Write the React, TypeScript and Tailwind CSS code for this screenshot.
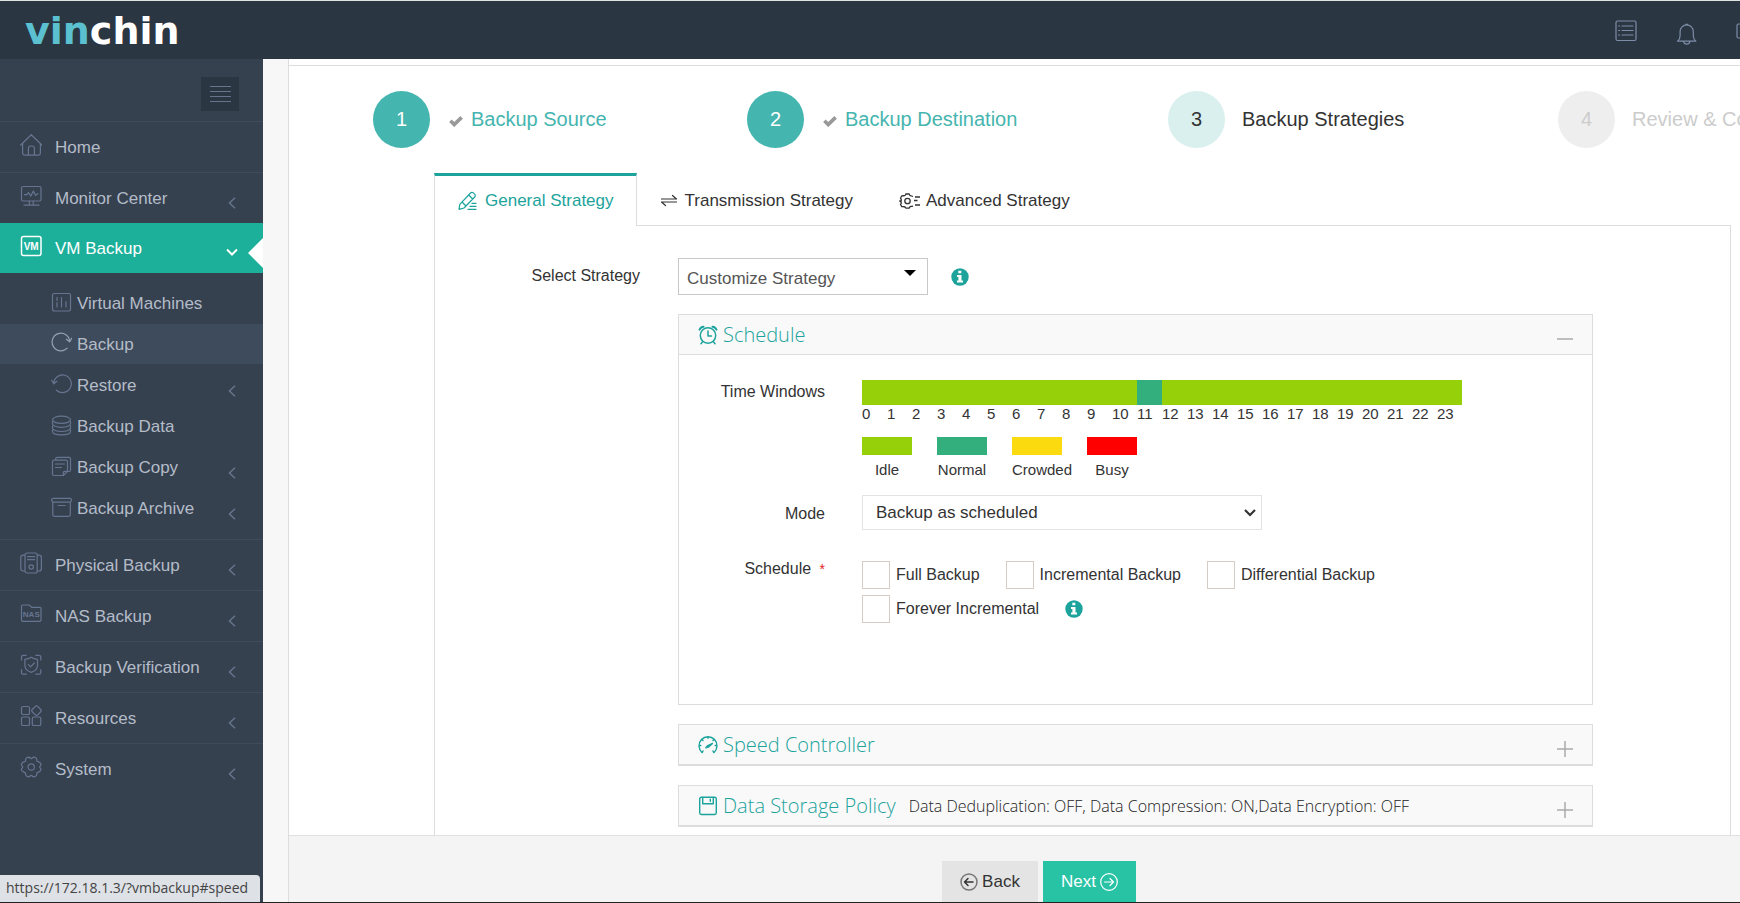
import { useState, type ReactNode } from "react";

type IconProps = { children: ReactNode; size?: string; box?: string };

function Icon({ children, size = "size-[22px]", box = "0 0 22 22" }: IconProps) {
  return (
    <svg
      viewBox={box}
      className={`${size} shrink-0`}
      fill="none"
      stroke="currentColor"
      strokeWidth="1.2"
      strokeLinecap="round"
      strokeLinejoin="round"
      aria-hidden="true"
    >
      {children}
    </svg>
  );
}

const icons = {
  home: (
    <Icon>
      <path d="M.7 11 11.3.7 21.9 11M2.6 9.5V19a2.2 2.2 0 0 0 2.2 2.2h13.4a2.2 2.2 0 0 0 2.2-2.2V9.5M8.4 21.2v-7a2.2 2.2 0 0 1 2.2-2.2h1.6a2.2 2.2 0 0 1 2.2 2.2v7" />
    </Icon>
  ),
  monitor: (
    <Icon>
      <rect x="1.5" y="1.5" width="19.5" height="14.5" rx="1.5" />
      <path d="M4.5 9.7h2.3l1.7-2.2 2.3 3.6 2.5-5 2.2 4.2 2.4-1.6M9.3 16v4M13.2 16v4M4 20.2h15" />
    </Icon>
  ),
  vm: (
    <Icon>
      <rect x="1.5" y="1.5" width="19.5" height="19" rx="2" strokeWidth="1.5" />
      <text x="11.2" y="14.8" textAnchor="middle" fontSize="10" fontWeight="700" fontFamily="Liberation Sans, sans-serif" fill="currentColor" stroke="none">
        VM
      </text>
    </Icon>
  ),
  physical: (
    <Icon>
      <path d="M5 3.2H3A2.4 2.4 0 0 0 .8 5.6v11A2.4 2.4 0 0 0 3 19h2M17.2 3.2h2a2.4 2.4 0 0 1 2.2 2.4v11a2.4 2.4 0 0 1-2.2 2.4h-2M5 3a2 2 0 0 1 2-2h8.2a2 2 0 0 1 2 2v16a2 2 0 0 1-2 2H7a2 2 0 0 1-2-2zM7.5 4.7h7.2M7.5 7.7h7.2" />
      <circle cx="11.2" cy="15" r="2.2" />
    </Icon>
  ),
  nas: (
    <Icon>
      <path d="M1.5 4V17a1.3 1.3 0 0 0 1.3 1.3h16.9a1.3 1.3 0 0 0 1.3-1.3V5.6a1.3 1.3 0 0 0-1.3-1.3h-8L9 2H2.8a1.3 1.3 0 0 0-1.3 1.3z" />
      <text x="11.3" y="13.900" textAnchor="middle" fontSize="8" fontWeight="700" fontFamily="Liberation Sans, sans-serif" fill="currentColor" stroke="none">
        NAS
      </text>
    </Icon>
  ),
  verify: (
    <Icon>
      <path d="M1.5 6V3A1.7 1.7 0 0 1 3.2 1.3h3M15.8 1.3h3A1.7 1.7 0 0 1 20.8 3v3M20.8 15.5v3a1.7 1.7 0 0 1-1.7 1.7h-3.3M6.2 20.2h-3a1.7 1.7 0 0 1-1.7-1.7v-3" />
      <path d="M11.2 3.3c2 1.4 4.2 1.9 6.3 2v6.2c0 3.5-2.6 5.6-6.3 6.9-3.7-1.3-6.3-3.4-6.3-6.9V5.3c2.1-.1 4.3-.6 6.3-2z" />
      <path d="m8.5 10.700 2.100 2.200 3.700-3.900" />
    </Icon>
  ),
  resources: (
    <Icon>
      <rect x="1.5" y="1.5" width="8" height="8" rx="1.600" />
      <rect x="1.5" y="12" width="8" height="8.5" rx="1.600" />
      <rect x="12.300" y="12" width="8.5" height="8.5" rx="1.600" />
      <rect x="12.700" y="1.800" width="7.600" height="7.600" rx="1.600" transform="rotate(45 16.5 5.600)" />
    </Icon>
  ),
  system: (
    <Icon>
      <circle cx="11.2" cy="11" r="3.2" />
      <path d="M8.600 1.200c1.400 0 1.600 1.400 2.600 1.400s1.200-1.400 2.600-1.400c2.300.3 3.300 1.800 3 3.600.2 1 3.600.7 4.200 3.500.3 1.400-1.300 1.700-1.300 2.700s1.600 1.300 1.300 2.700c-.6 2.800-4 2.500-4.200 3.500.3 1.800-.7 3.300-3 3.600-1.400 0-1.600-1.400-2.600-1.400s-1.200 1.400-2.600 1.400c-2.300-.3-3.300-1.800-3-3.600-.2-1-3.600-.7-4.200-3.500-.3-1.400 1.300-1.700 1.300-2.700S1.100 9.700 1.400 8.300C2 5.500 5.400 5.800 5.600 4.800c-.3-1.800.7-3.300 3-3.600z" />
    </Icon>
  ),
};

const sub = { size: "size-[21px]", box: "0 0 21 21" };

const subIcons = {
  machines: (
    <Icon {...sub}>
      <rect x="1.5" y="1.5" width="18" height="17.5" rx="1.700" />
      <path d="M6 5.5v3M6 10.5v4.500M10.500 5.500v9.500M15 9.500V15" />
    </Icon>
  ),
  backup: (
    <Icon {...sub}>
      <path d="M16.200 16.200A8.800 8.800 0 1 1 18.700 9.500M15.300 7.300l3.400 2.500 2-3.600" />
    </Icon>
  ),
  restore: (
    <Icon {...sub}>
      <path d="M5.500 16.200A8.800 8.800 0 1 0 2.700 9.500M5.900 7.300 2.700 9.800.7 6.200" />
    </Icon>
  ),
  data: (
    <Icon {...sub}>
      <ellipse cx="10.5" cy="4.800" rx="9" ry="3.600" />
      <path d="M1.500 6.500v2.300c0 2 4 3.500 9 3.500s9-1.500 9-3.500V6.500M1.500 11v2c0 2 4 3.500 9 3.500s9-1.500 9-3.500v-2M1.500 14.800v1.700c0 2 4 3.300 9 3.300s9-1.300 9-3.300v-1.700" />
    </Icon>
  ),
  copy: (
    <Icon {...sub}>
      <path d="M4.700 4V2.800a1.500 1.500 0 0 1 1.500-1.500H18a1.500 1.500 0 0 1 1.500 1.500V14a1.500 1.500 0 0 1-1.500 1.500h-1M12.300 19.500H3A1.500 1.500 0 0 1 1.500 18V5.700A1.500 1.500 0 0 1 3 4.200h12a1.500 1.500 0 0 1 1.500 1.500v9.600l-4.200 4.200v-2.700a1.500 1.500 0 0 1 1.500-1.500h2.700M4.500 8h9M4.500 11.500h6" />
    </Icon>
  ),
  archive: (
    <Icon {...sub}>
      <rect x=".7" y="1.300" width="19.700" height="3.800" rx="1.5" />
      <path d="M1.800 5.200v12.600a1.500 1.500 0 0 0 1.500 1.500h14.500a1.500 1.500 0 0 0 1.500-1.500V5.200M7 8.500h7" />
    </Icon>
  ),
};

function Caret({ open }: { open?: boolean }) {
  return open ? (
    <svg viewBox="0 0 12 12" className="mr-[25px] mt-2 size-3" fill="none" stroke="currentColor" strokeWidth="2" aria-hidden="true">
      <path d="m1 3.500 5 5 5-5" />
    </svg>
  ) : (
    <svg viewBox="0 0 12 12" className="mr-[25px] mt-[10px] size-3 text-[#66758b]" fill="none" stroke="currentColor" strokeWidth="1.5" aria-hidden="true">
      <path d="m9 .800-5.500 5.200 5.500 5.200" />
    </svg>
  );
}

function MenuRow({ icon, label, caret = true }: { icon: ReactNode; label: string; caret?: boolean }) {
  return (
    <li>
      <a href="#menu" className="flex h-[51px] items-center border-t border-[#3e4b5c] pl-5">
        <span className="mb-1 text-[#66758f]">{icon}</span>
        <span className="ml-[13px] flex-1 pt-px">{label}</span>
        {caret && <Caret />}
      </a>
    </li>
  );
}

function SubRow({ icon, label, caret, active }: { icon: ReactNode; label: string; caret?: boolean; active?: boolean }) {
  return (
    <li>
      <a href="#submenu" className={active ? "mb-px flex h-10 items-center bg-[#3e4b5c] pl-[51px]" : "flex h-[41px] items-center pl-[51px]"}>
        <span className={active ? "mb-[3px] text-[#94a0b4]" : "mb-[3px] text-[#66758f]"}>{icon}</span>
        <span className="ml-[5px] flex-1 pt-px">{label}</span>
        {caret && <Caret />}
      </a>
    </li>
  );
}

function Sidebar() {
  return (
    <nav className="w-[263px] shrink-0 bg-[#364150] text-[17px] text-[#b4bcc8]">
      <div className="flex h-[62px] justify-end pr-6 pt-[18px]">
        <button aria-label="Toggle menu" className="flex h-[34px] w-[38px] items-center justify-center bg-[#2b3643] text-[#66758b]">
          <svg viewBox="0 0 21 17" className="h-[17px] w-[21px]" stroke="currentColor" aria-hidden="true">
            <path d="M0 .500h21M0 5.500h21M0 10.500h21M0 15.500h21" />
          </svg>
        </button>
      </div>
      <ul>
        <MenuRow icon={icons.home} label="Home" caret={false} />
        <MenuRow icon={icons.monitor} label="Monitor Center" />
        <li>
          <a href="#vmbackup" className="relative flex h-[50px] items-center bg-[#1caf9a] pl-5 text-white">
            <span className="mb-1">{icons.vm}</span>
            <span className="ml-[13px] flex-1 pt-px">VM Backup</span>
            <Caret open />
            <svg viewBox="0 0 15 30" className="absolute bottom-[5px] right-0 h-[30px] w-[15px]" fill="#fff" aria-hidden="true">
              <path d="M15 0v30L0 15z" />
            </svg>
          </a>
          <ul className="py-[10px]">
            <SubRow icon={subIcons.machines} label="Virtual Machines" />
            <SubRow icon={subIcons.backup} label="Backup" active />
            <SubRow icon={subIcons.restore} label="Restore" caret />
            <SubRow icon={subIcons.data} label="Backup Data" />
            <SubRow icon={subIcons.copy} label="Backup Copy" caret />
            <SubRow icon={subIcons.archive} label="Backup Archive" caret />
          </ul>
        </li>
        <MenuRow icon={icons.physical} label="Physical Backup" />
        <MenuRow icon={icons.nas} label="NAS Backup" />
        <MenuRow icon={icons.verify} label="Backup Verification" />
        <MenuRow icon={icons.resources} label="Resources" />
        <MenuRow icon={icons.system} label="System" />
      </ul>
    </nav>
  );
}

function Header() {
  return (
    <header className="flex h-[59px] shrink-0 items-center justify-between overflow-hidden border-t border-[#dfe1e3] bg-[#2b3643] pl-[25px]">
      <a href="#home" className="pt-[2px] font-['DejaVu_Sans',sans-serif] text-[38px] font-bold leading-none text-white">
        <span className="text-[#5bc0cf]">vin</span>chin
      </a>
      <div className="-mr-[18px] flex items-center text-[#7d8da8]">
        <button aria-label="Tasks" className="mt-px">
          <Icon>
            <rect x="1" y="1" width="20" height="19.5" rx="1.5" />
            <path d="M3.600 6h1M7 6h11M3.600 10.500h1M7 10.500h11M3.600 15h1M7 15h11" />
          </Icon>
        </button>
        <button aria-label="Notifications" className="ml-[39px] mt-[7px]">
          <Icon>
            <path d="M1.500 18.200c2-1.500 2.600-3.200 2.600-5.500V8.500a6.600 6.600 0 0 1 13.200 0v4.200c0 2.300.6 4 2.600 5.500zM7.500 18.700a3.300 3.300 0 0 0 6.400 0M9.700 1.300h2" />
          </Icon>
        </button>
        <button aria-label="Account" className="ml-[38px] mt-1">
          <Icon>
            <rect x="1" y="3" width="20" height="14" rx="1.5" />
          </Icon>
        </button>
      </div>
    </header>
  );
}

function Check() {
  return (
    <svg viewBox="0 0 14 11" className="mt-1 h-[11px] w-[14px]" fill="none" stroke="#999" strokeWidth="3.600" aria-hidden="true">
      <path d="m1.400 4.800 3.800 3.800 7.400-7.200" />
    </svg>
  );
}

function Steps() {
  return (
    <ol className="grid grid-cols-[374fr_421fr_390fr_182fr] whitespace-nowrap pb-[25px] pl-[84px] pt-[25px] text-[20px]">
      {["Backup Source", "Backup Destination"].map((label, i) => (
        <li key={label} className="flex min-w-0 items-center text-[#45b5af]">
          <span className="flex size-[57px] shrink-0 items-center justify-center rounded-full bg-[#45b5af] pb-[2px] text-white">{i + 1}</span>
          <span className="ml-[19px] mr-2">
            <Check />
          </span>
          <span className="pb-[2px]">{label}</span>
        </li>
      ))}
      <li className="flex min-w-0 items-center text-[#333]">
        <span className="mr-[17px] flex size-[57px] shrink-0 items-center justify-center rounded-full bg-[#daf0ee] pb-[2px]">3</span>
        <span className="pb-[2px]">Backup Strategies</span>
      </li>
      <li className="flex min-w-0 items-center text-[#ccc]">
        <span className="mr-[17px] flex size-[57px] shrink-0 items-center justify-center rounded-full bg-[#eee] pb-[2px]">4</span>
        <span className="pb-[2px]">Review &amp; Confirm</span>
      </li>
    </ol>
  );
}

function Tabs() {
  return (
    <div role="tablist" className="flex h-[53px] border-b border-[#ddd] text-[17px] text-[#333]">
      <button role="tab" aria-selected="true" className="-mb-px flex items-center gap-2 border-x border-t-[3px] border-x-[#ddd] border-t-[#1ba39c] bg-white px-[22px] text-[#1ba39c]">
        <Icon size="size-5" box="0 0 20 20">
          <path d="M2 18.300l.8-5L13.500 2a2 2 0 0 1 2.900-.100l1.200 1.200a2 2 0 0 1 .1 2.900L7 17zM5 11l4 4M11.700 4l4 4M11 18.400h8M13 15.400h6M15 12.400h4" />
        </Icon>
        General Strategy
      </button>
      <button role="tab" aria-selected="false" className="flex items-center gap-2 pl-6 pr-[22px] pt-[3px]">
        <Icon size="size-4" box="0 0 16 16">
          <path d="M.500 6h15L11.500 2.500M15.500 9H.500l4 3.500" />
        </Icon>
        Transmission Strategy
      </button>
      <button role="tab" aria-selected="false" className="flex items-center gap-[6px] pl-6 pr-[22px] pt-[3px]">
        <svg viewBox="0 0 21 16" className="h-4 w-[21px]" fill="none" stroke="currentColor" strokeWidth="1.300" strokeLinejoin="round" aria-hidden="true">
          <circle cx="8.5" cy="8" r="2.700" />
          <path d="M14 3.500 12.700 3c-1-.3-1.700-.1-2.200-1.200L10.200 1H6.800l-.4 1C5.900 3 5.200 2.800 4.200 2.700l-1.400.1-1.300 2.400.6 1c.4.700.2 1 .1 1.800L.7 8l1.500 1.200v1.200l-.7 1.100 1.300 2.100 1.500.1c1 .1 1.600-.1 2.100.7l.5.700h3.300l.4-.8c.5-1 1.300-.8 2.300-.9l1.100-.3M16 4h5M15 7.500h3.500M16 12h5" />
        </svg>
        Advanced Strategy
      </button>
    </div>
  );
}

function Info() {
  return (
    <button aria-label="More information" className="text-[#1ba39c]">
      <svg viewBox="0 0 18 18" className="size-[18px]" aria-hidden="true">
        <circle cx="9" cy="9" r="8.700" fill="currentColor" />
        <path d="M7.300 2.800h3v2.500h-3zM6 7h4.500v5.500H12v2H6v-2h1.400V9H6z" fill="#fff" />
      </svg>
    </button>
  );
}

const alarmIcon = (
  <Icon size="size-5" box="0 0 20 20">
    <circle cx="10" cy="10.5" r="7.700" strokeWidth="1.5" />
    <path strokeWidth="1.5" d="M10 6v5h3.500M4.800 16.600 3 18.700M15.200 16.600l1.800 2.100" />
    <path strokeWidth="2" d="M1.500 4.700c.8-1.800 2-2.800 4-3M18.500 4.700c-.8-1.800-2-2.800-4-3" />
  </Icon>
);

const gaugeIcon = (
  <Icon size="size-5" box="0 0 20 20">
    <path strokeWidth="1.400" d="M4.200 17.600a9 9 0 1 1 11.600 0M4.200 17.600l.8-1.600M15.800 17.600l-.8-1.600M10 2v1.200M1.600 10.500h1.200M18.400 10.500h-1.200M4.200 4.700l.8.800M15.800 4.700l-.8.800M9.300 10.800l5.200-2.300-4.200 3.700-2.500.700z" />
  </Icon>
);

const diskIcon = (
  <Icon size="size-5" box="0 0 20 20">
    <rect x="1.700" y="1.200" width="16.600" height="17.300" rx="1.700" strokeWidth="1.400" />
    <path strokeWidth="1.400" d="M4.700 1.500v6.300h10.600V1.500M12.300 3.300v2" />
  </Icon>
);

type SectionProps = { icon: ReactNode; title: string; summary?: string; open?: boolean; children?: ReactNode };

function Section({ icon, title, summary, open, children }: SectionProps) {
  return (
    <section className={open ? "border border-[#ddd]" : "border border-b-2 border-[#ddd]"}>
      <div className={open ? "flex h-10 items-center border-b border-[#ddd] bg-[#f9f9f9] pl-[19px] pr-[19px]" : "flex h-[39px] items-center bg-[#f9f9f9] pl-[19px] pr-[19px]"}>
        <span className="text-[#1ba39c]">{icon}</span>
        <h3 className="ml-[5px] pt-px font-['Open_Sans',sans-serif] text-[20px] font-light leading-none text-[#1ba39c]">{title}</h3>
        {summary && <p className="ml-[13px] font-['Open_Sans',sans-serif] text-[16px] font-light leading-none text-[#222]">{summary}</p>}
        <button aria-label={open ? "Collapse " + title : "Expand " + title} className="ml-auto mt-[9px] text-[#aaa]">
          <svg viewBox="0 0 16 16" className="size-4" stroke="currentColor" strokeWidth="1.5" aria-hidden="true">
            <path d={open ? "M0 8h16" : "M0 8h16M8 0v16"} />
          </svg>
        </button>
      </div>
      {children}
    </section>
  );
}

const hours = Array.from({ length: 24 }, (_, i) => i);
const legend = [
  { label: "Idle", color: "bg-[#95d009]" },
  { label: "Normal", color: "bg-[#33af7e]" },
  { label: "Crowded", color: "bg-[#fbdb10]" },
  { label: "Busy", color: "bg-[#ff0000]" },
];

function Tick({ label }: { label: string }) {
  return (
    <label className="flex items-center gap-[6px]">
      <input type="checkbox" className="size-7 shrink-0 appearance-none border border-[#d4cdc6] bg-white checked:bg-[#1ba39c]" />
      {label}
    </label>
  );
}

function SchedulePanel() {
  return (
    <div className="grid grid-cols-[146px_1fr] gap-x-[37px] pb-[81px] pt-[25px] text-[16px] text-[#333]">
      <div className="h-6 text-right leading-6">Time Windows</div>
      <div>
        <div className="flex">
          {hours.map((h) => (
            <div key={h} className="w-[25px]">
              <div className={h === 11 ? "h-[25px] bg-[#33af7e]" : "h-[25px] bg-[#95d009]"} />
              <div className="text-[15px] leading-[18px]">{h}</div>
            </div>
          ))}
        </div>
        <div className="mt-[14px] flex gap-[25px]">
          {legend.map((item) => (
            <div key={item.label} className="w-[50px] whitespace-nowrap text-center text-[15px]">
              <div className={`h-[18px] ${item.color}`} />
              <div className="mt-[5px] leading-5">{item.label}</div>
            </div>
          ))}
        </div>
      </div>
      <label htmlFor="mode" className="mt-[15px] text-right leading-[37px]">
        Mode
      </label>
      <div className="relative mt-[15px] w-[400px]">
        <select id="mode" className="h-[35px] w-full appearance-none border border-[#e3e3e3] bg-white pl-[13px] pt-px text-[17px] text-[#333]">
          <option>Backup as scheduled</option>
          <option>Once-off backup</option>
        </select>
        <svg viewBox="0 0 12 8" className="pointer-events-none absolute right-[6px] top-[14px] h-2 w-3" fill="none" stroke="#333" strokeWidth="2.200" aria-hidden="true">
          <path d="m1 1 5 5 5-5" />
        </svg>
      </div>
      <div className="mt-[25px] text-right">
        Schedule <span className="ml-1 text-[14px] text-[#e02222]">*</span>
      </div>
      <div className="mt-[29px] grid gap-[6px]">
        <div className="flex flex-wrap gap-x-[26px]">
          <Tick label="Full Backup" />
          <Tick label="Incremental Backup" />
          <Tick label="Differential Backup" />
        </div>
        <div className="flex items-center gap-[26px]">
          <Tick label="Forever Incremental" />
          <Info />
        </div>
      </div>
    </div>
  );
}

function StrategyForm() {
  const [strategy, setStrategy] = useState("Customize Strategy");
  return (
    <div className="flex-1 border-x border-[#ddd] pr-[137px] pt-8">
      <div className="flex items-center">
        <label htmlFor="strategy" className="w-[205px] pb-[2px] text-right text-[16px] text-[#333]">
          Select Strategy
        </label>
        <div className="relative ml-[38px] w-[250px]">
          <select
            id="strategy"
            value={strategy}
            onChange={(e) => setStrategy(e.target.value)}
            className="h-[37px] w-full appearance-none border border-[#c8c8c8] bg-white pl-2 pt-1 text-[17px] text-[#555]"
          >
            <option>Customize Strategy</option>
            <option>Default Strategy</option>
          </select>
          <svg viewBox="0 0 12 6" className="pointer-events-none absolute right-3 top-3 h-[6px] w-3" aria-hidden="true">
            <path d="M0 0h12L6 6z" />
          </svg>
        </div>
        <span className="ml-[23px] flex">
          <Info />
        </span>
      </div>
      <div className="ml-[243px] mt-[19px] grid gap-[19px]">
        <Section icon={alarmIcon} title="Schedule" open>
          <SchedulePanel />
        </Section>
        <Section icon={gaugeIcon} title="Speed Controller" />
        <Section icon={diskIcon} title="Data Storage Policy" summary="Data Deduplication: OFF, Data Compression: ON,Data Encryption: OFF" />
      </div>
    </div>
  );
}

function Footer() {
  return (
    <footer className="flex h-[67px] shrink-0 justify-center gap-[5px] border-t border-[#e0e0e0] bg-[#f4f4f4] pl-[49px] pt-[25px] text-[17px]">
      <button className="flex items-center justify-center gap-1 bg-[#e4e4e4] px-[18px] text-[#333]">
        <Icon size="size-[18px]" box="0 0 18 18">
          <circle cx="9" cy="9" r="8" stroke="#777" strokeWidth="1.5" />
          <path strokeWidth="1.5" d="M13 9H4.500M8 5.500 4.500 9 8 12.500" />
        </Icon>
        Back
      </button>
      <button className="flex items-center justify-center gap-1 bg-[#28c3a5] px-[18px] text-white">
        Next
        <Icon size="size-[18px]" box="0 0 18 18">
          <circle cx="9" cy="9" r="8.300" />
          <path d="M4.500 9h9M10 5.500 13.500 9 10 12.500" />
        </Icon>
      </button>
    </footer>
  );
}

export default function App() {
  return (
    <div className="flex h-screen flex-col overflow-hidden border-b border-[#222] bg-[#f7f7f7] font-['Liberation_Sans',Arial,sans-serif]">
      <Header />
      <div className="flex min-h-0 flex-1">
        <Sidebar />
        <main className="ml-[25px] flex min-w-0 flex-1 flex-col border-l border-[#ddd] bg-white">
          <div className="flex min-h-0 flex-1 flex-col overflow-hidden pt-[6px]">
            <div className="flex flex-1 flex-col border-t border-[#ddd]">
              <Steps />
              <div className="ml-[145px] mr-[9px] flex flex-1 flex-col">
                <Tabs />
                <StrategyForm />
              </div>
            </div>
          </div>
          <Footer />
        </main>
      </div>
      <div className="fixed bottom-px left-0 rounded-tr bg-[#dee1e6] pb-1 pl-[6px] pr-3 pt-[3px] font-['Open_Sans',sans-serif] text-[14px] leading-5 text-[#444]">
        https://172.18.1.3/?vmbackup#speed
      </div>
    </div>
  );
}
